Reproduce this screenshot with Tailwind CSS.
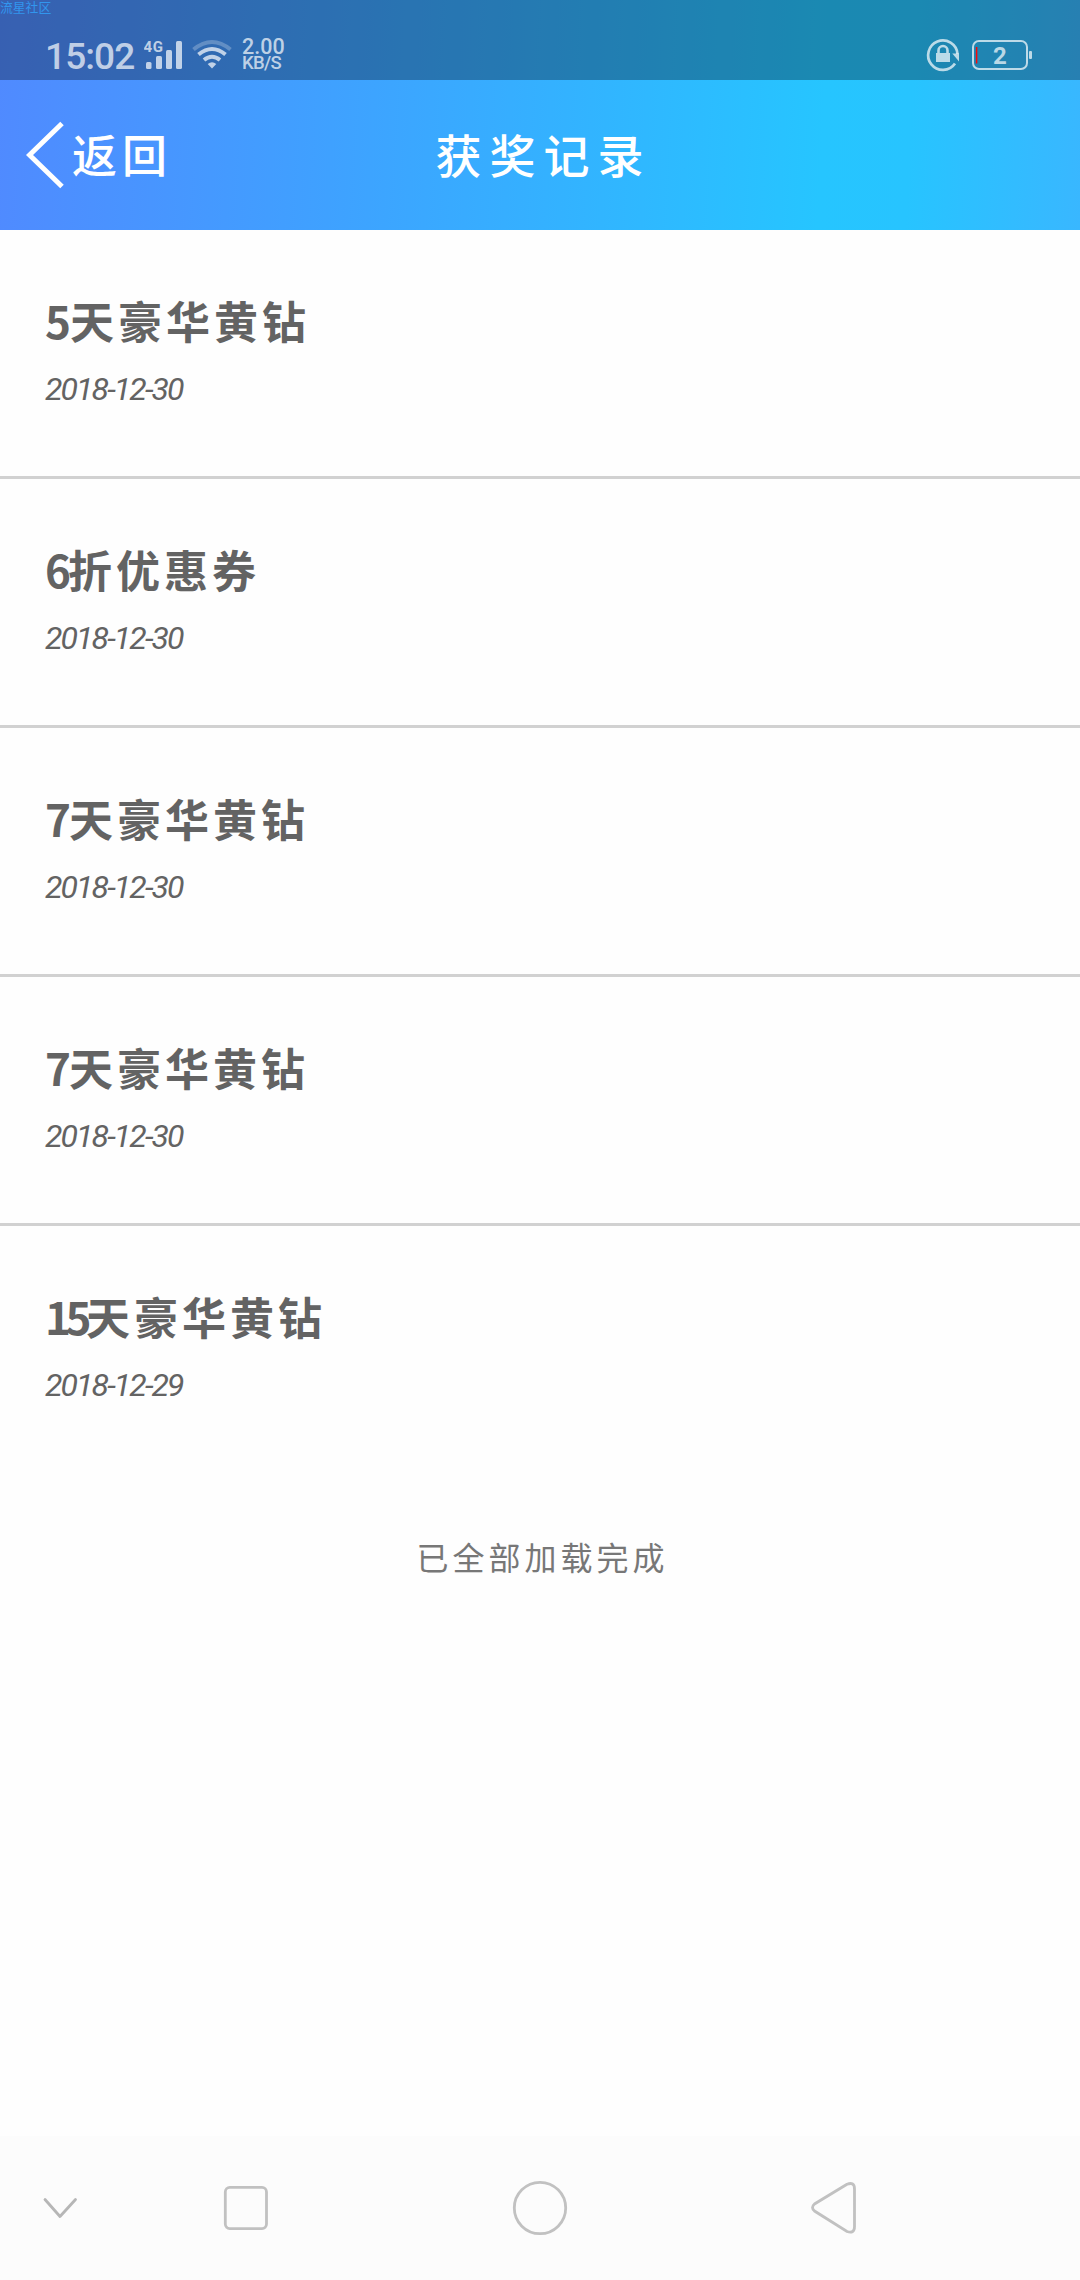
<!DOCTYPE html>
<html lang="zh-CN">
<head>
    <meta charset="UTF-8">
    <meta name="viewport" content="width=device-width, initial-scale=1.0">
    <title>获奖记录</title>
    <script src="https://cdn.jsdelivr.net/npm/@tailwindcss/browser@4"></script>
</head>
<body class="bg-white">
<div class="relative flex flex-col w-[1080px] h-[2280px] overflow-hidden bg-[#fefefe] text-[#636363] font-['Noto_Sans_CJK_SC',sans-serif]">

    <!-- Top area: status bar + title bar share one gradient -->
    <header class="flex flex-col h-[230px] shrink-0 text-white bg-[linear-gradient(93deg,#508aff_0%,#3fa1ff_31%,#26c5ff_76%,#27c4ff_84%,#39b7ff_100%)]">
        <!-- Status bar -->
        <div class="flex justify-between h-20 pl-[45px] pr-12 bg-black/30 font-['Roboto',sans-serif] text-white/70">
            <div class="flex">
                <span class="w-[99px] pt-[35px] text-[37px] leading-[44px] font-medium tracking-[-0.9px]">15:02</span>
                <svg class="w-[40px] h-20" viewBox="144 0 40 80" fill="currentColor">
                    <text x="143.500" y="51.500" font-size="15" font-weight="700" textLength="19.500">4G</text>
                    <rect x="146" y="62" width="5.500" height="7" rx="1.500"/>
                    <rect x="156" y="56" width="6" height="13" rx="1.500"/>
                    <rect x="166" y="50" width="6" height="19" rx="1.500"/>
                    <rect x="176" y="41" width="6" height="28" rx="1.500"/>
                </svg>
                <svg class="w-[48px] h-20 ml-1" viewBox="188 0 48 80" fill="none" stroke="currentColor" stroke-width="4">
                    <path d="M193.500 49.500Q212 34.500 230.500 49.500" opacity=".35"/>
                    <path d="M198.500 54.500Q212 43.500 225.500 54.500"/>
                    <path d="M204 60Q212 53.500 220 60"/>
                    <path d="M207.700 64Q212 60.300 216.300 64L212 68.500Z" fill="currentColor" stroke="none"/>
                </svg>
                <div class="flex flex-col pt-[38px] pl-[6px]">
                    <span class="text-[21.5px] leading-[18px] font-medium">2.00</span>
                    <span class="text-[18.500px] leading-[15px] font-medium tracking-[-0.7px]">KB/S</span>
                </div>
            </div>
            <svg class="w-[110px] h-20" viewBox="922 0 110 80" fill="none" stroke="currentColor">
                <path d="M955 63.500A14.700 14.700 0 1 1 957.500 54" stroke-width="2.700"/>
                <path d="M952.300 53.500H959V61.500Z" fill="currentColor" stroke="none"/>
                <rect x="936" y="53" width="14" height="9" fill="currentColor" stroke="none"/>
                <path d="M938.500 53V50.500A4.500 4.500 0 0 1 947.500 50.500V53" stroke-width="2.600"/>
                <rect x="973" y="41" width="54" height="28" rx="6" stroke-width="2"/>
                <path d="M976.600 47V63.500" stroke="#f80808" stroke-width="1.500"/>
                <rect x="1029" y="51" width="3" height="8" rx="1" fill="currentColor" stroke="none"/>
                <text x="993" y="64" font-size="24" font-weight="700" fill="currentColor" stroke="none">2</text>
            </svg>
        </div>
        <!-- Title bar -->
        <div class="grid grid-cols-3 items-center h-[150px] font-medium">
            <a class="flex items-center pl-[26px]">
                <svg class="w-[38px] h-[68px]" viewBox="0 0 38 68" fill="none" stroke="currentColor" stroke-width="5">
                    <path d="M36 2.500L3.500 34L36 65.500"/>
                </svg>
                <span class="pl-[8px] pb-[2px] text-[45px] leading-[60px] tracking-[5px]">返回</span>
            </a>
            <h1 class="pl-[7px] pb-[4px] text-center text-[46px] leading-[60px] tracking-[8px]">获奖记录</h1>
        </div>
    </header>

    <!-- Prize list -->
    <ul class="flex flex-col">
        <li class="h-[249px] pt-[60px] pl-[45px] border-b-3 border-[#d1d1d1]">
            <p class="text-[44px] leading-[60px] font-bold tracking-[4px]"><span class="tracking-[-1px]">5</span>天豪华黄钻</p>
            <p class="mt-[18px] text-[32px] leading-[42px] italic tracking-[-1.9px] font-['Roboto',sans-serif]">2018-12-30</p>
        </li>
        <li class="h-[249px] pt-[60px] pl-[45px] border-b-3 border-[#d1d1d1]">
            <p class="text-[44px] leading-[60px] font-bold tracking-[4px]"><span class="tracking-[-3px]">6</span>折优惠券</p>
            <p class="mt-[18px] text-[32px] leading-[42px] italic tracking-[-1.9px] font-['Roboto',sans-serif]">2018-12-30</p>
        </li>
        <li class="h-[249px] pt-[60px] pl-[45px] border-b-3 border-[#d1d1d1]">
            <p class="text-[44px] leading-[60px] font-bold tracking-[4px]"><span class="tracking-[-2px]">7</span>天豪华黄钻</p>
            <p class="mt-[18px] text-[32px] leading-[42px] italic tracking-[-1.9px] font-['Roboto',sans-serif]">2018-12-30</p>
        </li>
        <li class="h-[249px] pt-[60px] pl-[45px] border-b-3 border-[#d1d1d1]">
            <p class="text-[44px] leading-[60px] font-bold tracking-[4px]"><span class="tracking-[-2px]">7</span>天豪华黄钻</p>
            <p class="mt-[18px] text-[32px] leading-[42px] italic tracking-[-1.9px] font-['Roboto',sans-serif]">2018-12-30</p>
        </li>
        <li class="h-[249px] pt-[60px] pl-[45px]">
            <p class="text-[44px] leading-[60px] font-bold tracking-[4px]"><span class="tracking-[-5.5px]">15</span>天豪华黄钻</p>
            <p class="mt-[18px] text-[32px] leading-[42px] italic tracking-[-1.9px] font-['Roboto',sans-serif]">2018-12-29</p>
        </li>
    </ul>

    <p class="mt-[60px] pl-[5px] text-center text-[32px] leading-[42px] tracking-[4px] text-[#777777]">已全部加载完成</p>

    <!-- Navigation keys -->
    <nav class="mt-auto h-36 shrink-0 bg-[#fcfcfc]">
        <svg class="w-full h-full" viewBox="0 2136 1080 144" fill="none" stroke="#c1c1c1" stroke-width="2.800">
            <path d="M45 2199.500L60 2216.500L75.500 2199.500" stroke="#b6b6b6" stroke-linecap="round" stroke-linejoin="round"/>
            <rect x="225.300" y="2187.400" width="41.200" height="41.200" rx="4.500"/>
            <circle cx="540" cy="2208" r="25.700"/>
            <path d="M847 2184.200L814.500 2204Q810.500 2207.500 814.500 2211L847 2231.500Q854.500 2234 854.500 2226.500V2189Q854.500 2181.500 847 2184.200Z"/>
        </svg>
    </nav>

    <!-- Watermark -->
    <span class="absolute left-0 top-0 text-[12.800px] leading-[14px] text-[#3296ee]">流星社区</span>
</div>
</body>
</html>
